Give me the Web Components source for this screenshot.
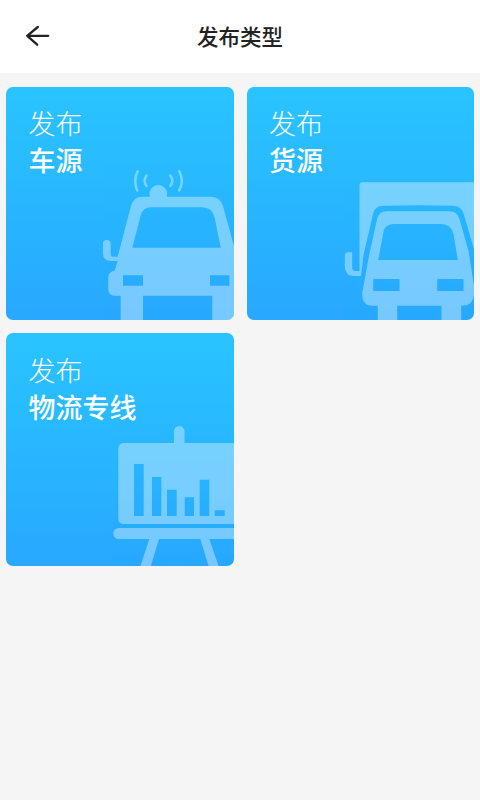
<!DOCTYPE html>
<html lang="zh-CN">
<head>
<meta charset="utf-8">
<title>发布类型</title>
<style>
body{margin:0;background:#f5f5f5;font-family:"Noto Sans CJK SC",sans-serif}
</style>
</head>
<body>
<publish-page></publish-page>
<script>
class TopBar extends HTMLElement{
  constructor(){
    super();
    this.attachShadow({mode:'open'}).innerHTML=`
    <style>
      :host{display:grid;grid-template-columns:1fr auto 1fr;align-items:center;height:73px;background:#fff;color:#222}
      svg{display:block;margin-left:25px;width:26px;height:22px;margin-bottom:1px}
      h1{margin:0 0 2px;font-size:21.5px;line-height:30px;font-weight:500}
    </style>
    <svg viewBox="0 0 26 22" fill="none" stroke="#222" stroke-width="2.3" stroke-linecap="round" stroke-linejoin="round"><path d="M23.2 10.800H2.200M12.800 2L2.200 10.800L12.200 19.700"/></svg>
    <h1><slot></slot></h1>`;
  }
}
customElements.define('top-bar',TopBar);

const art={
  car:`<svg viewBox="6 87 227.5 233"><g fill="#fff">
    <path fill-rule="evenodd" d="M150 196.700A8.800 8.800 0 1 1 166.600 196.700H211Q220.500 197 223 206L235 250V320H212.300V295.700H143V320H120.700V295.700H115Q108.300 295.700 108.300 289V277.500Q108.300 272 114.700 270.500L117.700 261H111Q103 261 103 253.500V243.500Q103 240 106.800 240Q110.700 240 110.700 243.500V254Q110.700 256.700 113.400 256.700H117.700L131 206Q133.600 196.700 142.500 196.700ZM151 207.300Q143 207.300 140.800 215L132.300 247.700H220.700L214.800 218Q212.500 207.300 202 207.300ZM123 275.300V285.700H143V275.300ZM210 275.300V285.700H229.300V275.300Z"/></g>
    <g fill="none" stroke="#fff" stroke-width="2.500" stroke-linecap="round"><path d="M137.600 171.400Q133 180.500 137.300 190.500M146.500 175.400Q142.800 180.500 146.500 186M170.300 175.400Q174.300 180.500 170.300 186M179.200 171.400Q184.500 180.500 179.200 190.500"/></g></svg>`,
  truck:`<svg viewBox="246.500 87 227.500 233"><g fill="#fff">
    <path d="M359 185.300Q359 182.300 362 182.300H475V254L463.200 214Q461 206.500 453.500 205.800Q418 204.600 382.500 205.800Q375 206.300 373 212L363.200 254L360.500 276H354Q344.300 276 344.300 266V256Q344.300 252.300 348 252.300H351.700V268Q351.700 271 354.700 271H359Z"/>
    <path fill-rule="evenodd" d="M386 211.300H449Q456.500 211.300 458.800 218.500L468 251L474 289Q474 305.700 463 305.700H460.700V320H441V305.700H396.700V320H377.300V305.700H372Q361.300 305.700 361.700 293L368.500 256L376.600 219Q378.500 211.300 386 211.300ZM393.500 224Q384.500 224 383 232L377.700 260H457.300L453 234Q450.500 224 441 224ZM372.700 279V291H399V279ZM436.700 279V291H463V279Z"/></g></svg>`,
  board:`<svg viewBox="6 333 227.500 233"><g fill="#fff">
    <path fill-rule="evenodd" d="M174 443V431.200A5.200 5.200 0 0 1 184.500 431.200V443H235V524H124Q118.300 524 118.300 518V449Q118.300 443 124 443ZM134 464V516H143.700V464ZM152 477V516H161.300V477ZM167 489.700V516H176.700V489.700ZM184.700 497.300V516H194V497.300ZM199.700 479.700V516H209.300V479.700ZM214.700 510.300V516H224.700V510.300Z"/>
    <path d="M118.800 528H235V539H209.300L219.200 568H209.200L200.300 539H159L150.200 568H139.800L149.300 539H118.800A5.500 5.500 0 0 1 118.800 528Z"/></g></svg>`
};

class PublishCard extends HTMLElement{
  constructor(){
    super();
    this.attachShadow({mode:'open'}).innerHTML=`
    <style>
      :host{display:grid;height:233px;border-radius:7px;overflow:hidden;color:#fff;background:linear-gradient(#29c4ff,#28a8ff)}
      .art,.copy{grid-area:1/1}
      .art svg{display:block;width:100%;height:233px;opacity:.37}
      .copy{padding:17.400px 0 0 22.500px;font-size:27px;line-height:37px}
      .copy div{font-weight:300}
      .copy strong{display:block;font-weight:500}
    </style>
    <div class="art">${art[this.getAttribute('kind')]}</div>
    <div class="copy"><div>发布</div><strong><slot></slot></strong></div>`;
  }
}
customElements.define('publish-card',PublishCard);

class PublishPage extends HTMLElement{
  constructor(){
    super();
    this.attachShadow({mode:'open'}).innerHTML=`
    <style>
      :host{display:block;min-height:800px}
      main{display:grid;grid-template-columns:1fr 1fr;gap:13.300px 13px;padding:14px 6px}
    </style>
    <top-bar>发布类型</top-bar>
    <main>
      <publish-card kind="car">车源</publish-card>
      <publish-card kind="truck">货源</publish-card>
      <publish-card kind="board">物流专线</publish-card>
    </main>`;
  }
}
customElements.define('publish-page',PublishPage);
</script>
</body>
</html>
